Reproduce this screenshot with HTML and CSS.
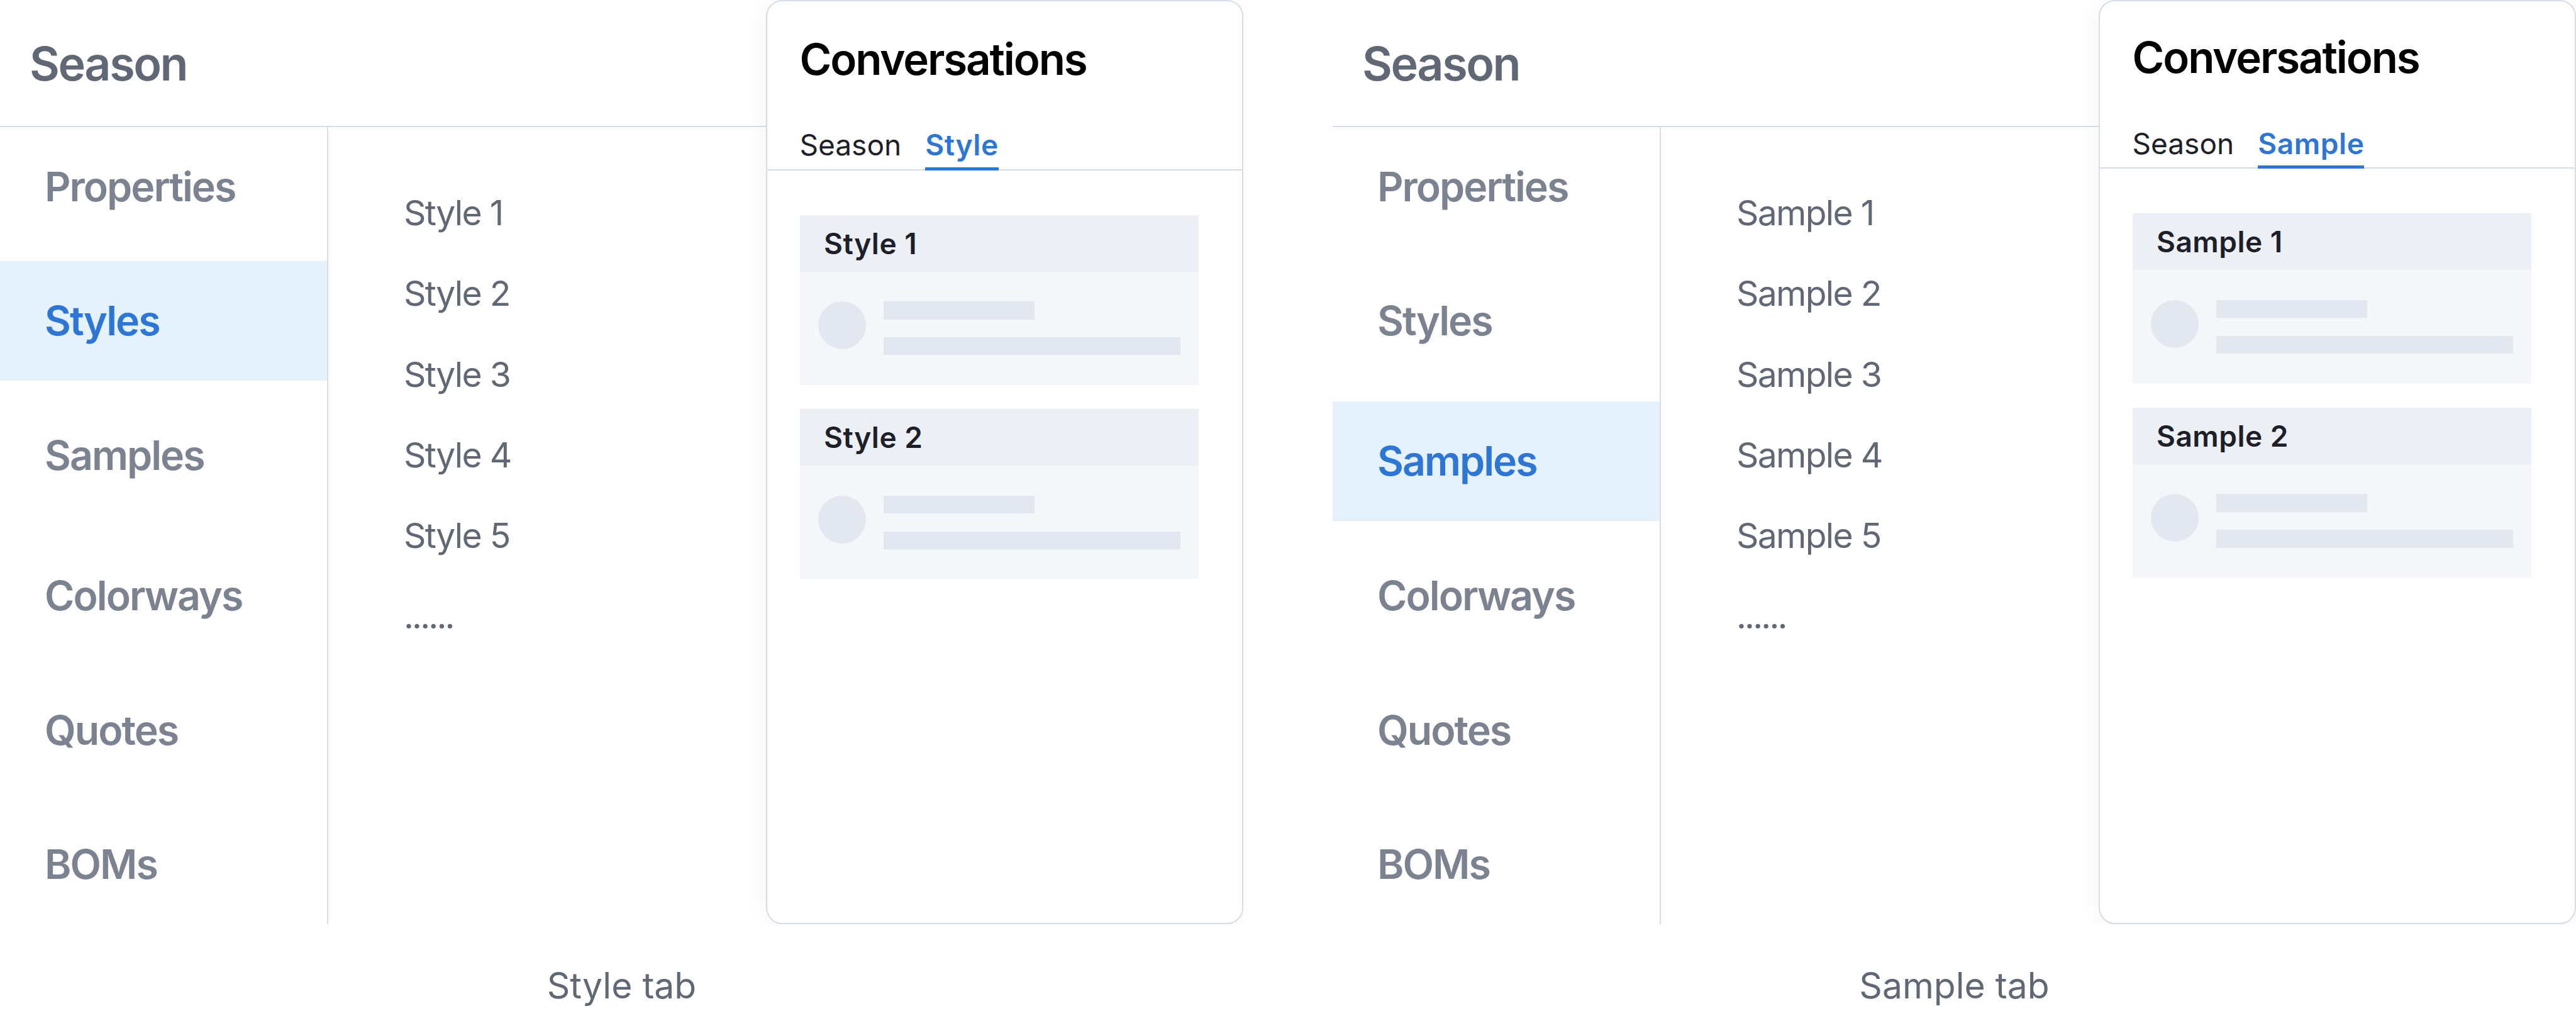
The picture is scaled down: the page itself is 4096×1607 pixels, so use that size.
FILE: index.html
```
<!DOCTYPE html>
<html lang="en">
<head>
  <meta charset="UTF-8">
  <title>Conversation tabs</title>
  <link rel="stylesheet" href="styles.css">
</head>
<body>
  <div class="board">
    <section class="example">
      <div class="frame">
        <div class="page">
          <header class="header">Season</header>
          <div class="content">
            <nav class="sidebar">
              <a class="nav-item">Properties</a>
              <a class="nav-item active">Styles</a>
              <a class="nav-item">Samples</a>
              <a class="nav-item spaced">Colorways</a>
              <a class="nav-item">Quotes</a>
              <a class="nav-item">BOMs</a>
            </nav>
            <ul class="list">
              <li>Style 1</li>
              <li>Style 2</li>
              <li>Style 3</li>
              <li>Style 4</li>
              <li>Style 5</li>
              <li class="more">......</li>
            </ul>
          </div>
        </div>
        <aside class="panel">
          <h2 class="panel-title">Conversations</h2>
          <div class="tabs">
            <span class="tab">Season</span>
            <span class="tab selected">Style</span>
          </div>
          <div class="cards">
            <div class="card">
              <div class="card-title">Style 1</div>
              <div class="card-body">
                <div class="avatar"></div>
                <div class="lines">
                  <div class="line short"></div>
                  <div class="line"></div>
                </div>
              </div>
            </div>
            <div class="card">
              <div class="card-title">Style 2</div>
              <div class="card-body">
                <div class="avatar"></div>
                <div class="lines">
                  <div class="line short"></div>
                  <div class="line"></div>
                </div>
              </div>
            </div>
          </div>
        </aside>
      </div>
      <p class="caption">Style tab</p>
    </section>

    <section class="example sample">
      <div class="frame">
        <div class="page">
          <header class="header">Season</header>
          <div class="content">
            <nav class="sidebar">
              <a class="nav-item">Properties</a>
              <a class="nav-item">Styles</a>
              <a class="nav-item active spaced">Samples</a>
              <a class="nav-item">Colorways</a>
              <a class="nav-item">Quotes</a>
              <a class="nav-item">BOMs</a>
            </nav>
            <ul class="list">
              <li>Sample 1</li>
              <li>Sample 2</li>
              <li>Sample 3</li>
              <li>Sample 4</li>
              <li>Sample 5</li>
              <li class="more">......</li>
            </ul>
          </div>
        </div>
        <aside class="panel">
          <h2 class="panel-title">Conversations</h2>
          <div class="tabs">
            <span class="tab">Season</span>
            <span class="tab selected">Sample</span>
          </div>
          <div class="cards">
            <div class="card">
              <div class="card-title">Sample 1</div>
              <div class="card-body">
                <div class="avatar"></div>
                <div class="lines">
                  <div class="line short"></div>
                  <div class="line"></div>
                </div>
              </div>
            </div>
            <div class="card">
              <div class="card-title">Sample 2</div>
              <div class="card-body">
                <div class="avatar"></div>
                <div class="lines">
                  <div class="line short"></div>
                  <div class="line"></div>
                </div>
              </div>
            </div>
          </div>
        </aside>
      </div>
      <p class="caption">Sample tab</p>
    </section>
  </div>
</body>
</html>
```
FILE: styles.css
```
* {
  box-sizing: border-box;
}
body {
  margin: 0;
  font-family: Inter, "Liberation Sans", sans-serif;
  background-color: #fff;
  color: #606876;
  overflow: hidden;
}
.board {
  display: flex;
  justify-content: space-between;
  width: 4096px;
  height: 1607px;
}
.example {
  width: 1977px;
}
.frame {
  display: flex;
  height: 1469px;
  overflow: hidden;
}
.page {
  display: flex;
  flex-direction: column;
  width: 1217.5px;
}
.header {
  height: 201.7px;
  padding: 57.5px 0 0 47px;
  border-bottom: 2.4px solid #d7dde7;
  font-size: 73.6px;
  font-weight: 600;
  line-height: 88px;
  letter-spacing: -2.4px;
}
.content {
  display: flex;
  flex: 1;
}
.sidebar {
  display: flex;
  flex-direction: column;
  gap: 23.75px;
  width: 522px;
  border-right: 2.4px solid #d7dde7;
}
.nav-item {
  height: 189.85px;
  padding-left: 71px;
  color: #7b8290;
  font-size: 64.4px;
  font-weight: 600;
  line-height: 190.5px;
  letter-spacing: -1.95px;
}
.nav-item.spaced {
  margin-top: 9.5px;
}
.nav-item.active {
  background-color: #e5f2fc;
  color: #2d76d6;
}
.list {
  margin: 0;
  padding: 72.5px 0 0 120px;
  list-style: none;
  font-size: 55.2px;
  line-height: 128.15px;
  letter-spacing: -1.7px;
}
.more {
  letter-spacing: -2.8px;
}

/* Conversations panel */
.panel {
  width: 759.5px;
  border: 2.4px solid #d7dde7;
  border-radius: 26px;
  background-color: #fff;
  box-shadow: 0 0 38px rgba(0, 0, 0, 0.05);
}
.panel-title {
  margin: 0;
  padding: 49.5px 0 0 52px;
  color: #000;
  font-size: 69px;
  font-weight: 600;
  line-height: 84px;
  letter-spacing: -2.1px;
}
.tabs {
  display: flex;
  gap: 38px;
  height: 135px;
  padding: 60.5px 0 0 52px;
  border-bottom: 2.4px solid #d7dde7;
}
.tab {
  height: 74.5px;
  color: #1d2029;
  font-size: 46px;
  line-height: 68px;
}
.tab.selected {
  border-bottom: 5px solid #2d76d6;
  color: #2d76d6;
  font-weight: 600;
  letter-spacing: 0.6px;
}
.cards {
  display: flex;
  flex-direction: column;
  gap: 38px;
  width: 633.6px;
  margin: 71px 0 0 52.5px;
}
.card-title {
  height: 90.2px;
  padding-left: 38px;
  background-color: #ecf0f5;
  color: #1d2029;
  font-size: 46px;
  font-weight: 600;
  line-height: 90px;
  letter-spacing: 0.5px;
}
.card-body {
  display: flex;
  gap: 28.5px;
  height: 180.3px;
  padding: 47.5px 28.5px;
  background-color: #f4f6fa;
}
.avatar {
  width: 76px;
  height: 76px;
  border-radius: 50%;
  background-color: #e3e8f0;
}
.lines {
  display: flex;
  flex: 1;
  flex-direction: column;
  gap: 28.5px;
}
.line {
  height: 28.5px;
  background-color: #e3e8f0;
}
.line.short {
  width: 239.7px;
}
.caption {
  margin: 63px 0 0;
  text-align: center;
  font-size: 57px;
  line-height: 70px;
}
.sample .panel-title {
  padding-top: 47.1px;
}
```
